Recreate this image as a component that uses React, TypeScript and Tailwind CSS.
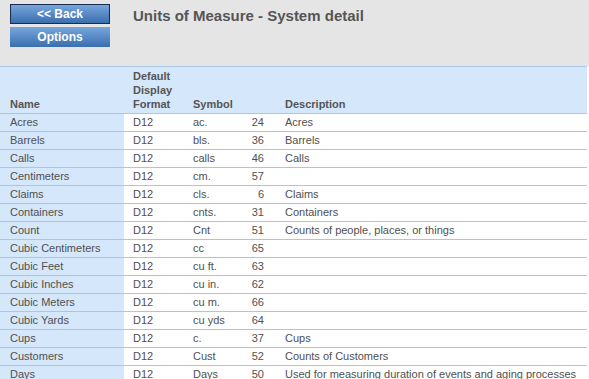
const rows: [string, string, string, number, string][] = [
  ['Acres', 'D12', 'ac.', 24, 'Acres'],
  ['Barrels', 'D12', 'bls.', 36, 'Barrels'],
  ['Calls', 'D12', 'calls', 46, 'Calls'],
  ['Centimeters', 'D12', 'cm.', 57, ''],
  ['Claims', 'D12', 'cls.', 6, 'Claims'],
  ['Containers', 'D12', 'cnts.', 31, 'Containers'],
  ['Count', 'D12', 'Cnt', 51, 'Counts of people, places, or things'],
  ['Cubic Centimeters', 'D12', 'cc', 65, ''],
  ['Cubic Feet', 'D12', 'cu ft.', 63, ''],
  ['Cubic Inches', 'D12', 'cu in.', 62, ''],
  ['Cubic Meters', 'D12', 'cu m.', 66, ''],
  ['Cubic Yards', 'D12', 'cu yds', 64, ''],
  ['Cups', 'D12', 'c.', 37, 'Cups'],
  ['Customers', 'D12', 'Cust', 52, 'Counts of Customers'],
  ['Days', 'D12', 'Days', 50, 'Used for measuring duration of events and aging processes'],
];

function NavButton({ label, outlined }: { label: string; outlined?: boolean }) {
  return (
    <button
      className={`w-[100px] h-[20px] flex items-center justify-center text-white font-bold text-[12px] leading-none bg-gradient-to-b from-[#76a6dc] to-[#3a6fae] ${
        outlined ? 'border border-[#1c2a4c]' : ''
      }`}
    >
      {label}
    </button>
  );
}

export default function App() {
  return (
    <div className="w-[589px] h-[379px] overflow-hidden bg-white font-['Liberation_Sans',Arial,sans-serif]">
      <div className="h-[66px] bg-[#e5e5e5] flex items-start">
        <div className="pl-[10px] pt-[4px] flex flex-col gap-[3px]">
          <NavButton label="<< Back" outlined />
          <NavButton label="Options" />
        </div>
        <h1 className="ml-[23px] mt-[5px] text-[15px] font-bold text-[#555]">Units of Measure - System detail</h1>
      </div>
      <table className="w-[587px] border-collapse table-fixed text-[11px] text-[#505050]">
        <colgroup>
          <col className="w-[124px]" />
          <col className="w-[60px]" />
          <col className="w-[50px]" />
          <col className="w-[42px]" />
          <col />
        </colgroup>
        <thead>
          <tr className="bg-[#d5e7fb] border-t border-b border-[#a9c6e4] align-bottom text-[#555] font-bold leading-[14px]">
            <th className="text-left pl-[10px] pb-[2px] pt-[2px] font-bold">Name</th>
            <th className="text-left pl-[9px] pb-[2px] pt-[2px] font-bold">
              Default
              <br />
              Display
              <br />
              Format
            </th>
            <th className="text-left pl-[9px] pb-[2px] pt-[2px] font-bold">Symbol</th>
            <th />
            <th className="text-left pl-[9px] pb-[2px] pt-[2px] font-bold">Description</th>
          </tr>
        </thead>
        <tbody>
          {rows.map(([name, fmt, sym, num, desc]) => (
            <tr key={name} className="h-[18px] border-b border-[#a9c6e4] leading-[17px]">
              <td className="bg-[#d5e7fb] pl-[10px] whitespace-nowrap">{name}</td>
              <td className="pl-[9px]">{fmt}</td>
              <td className="pl-[9px] whitespace-nowrap">{sym}</td>
              <td className="text-right pr-[12px]">{num}</td>
              <td className="pl-[9px] whitespace-nowrap">{desc}</td>
            </tr>
          ))}
        </tbody>
      </table>
    </div>
  );
}
